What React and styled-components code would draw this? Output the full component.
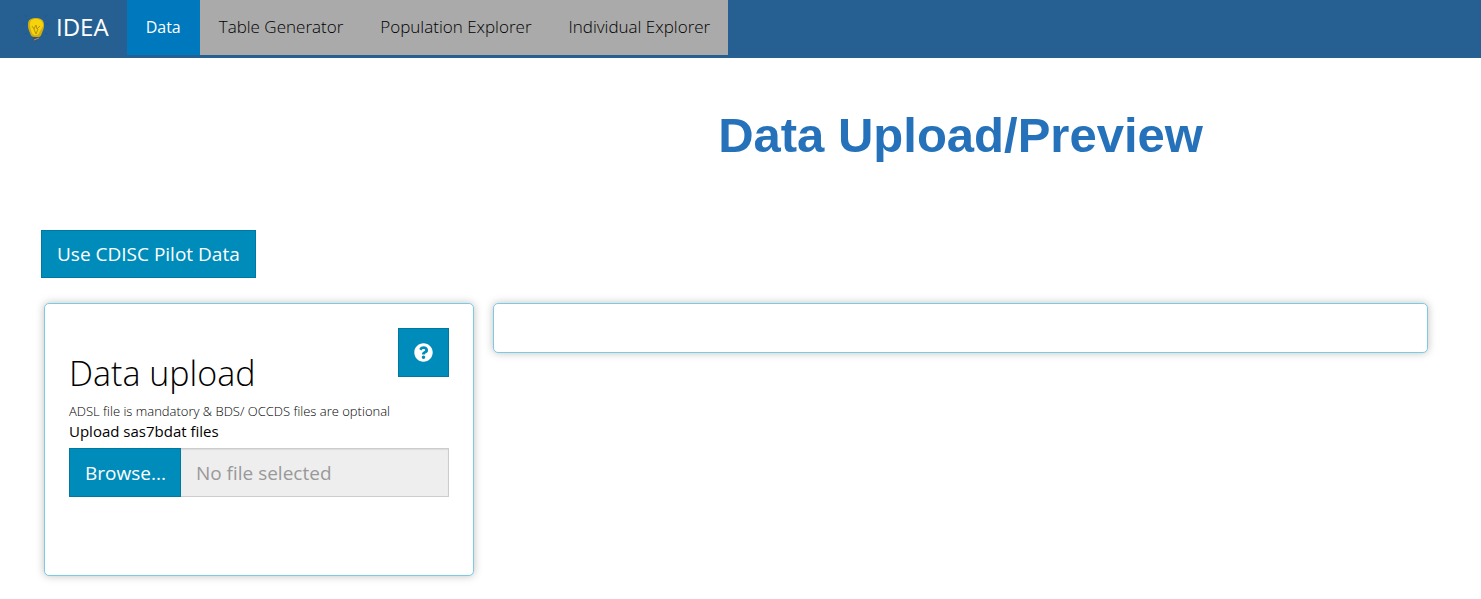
import React, { useState } from "react";
import styled, { createGlobalStyle } from "styled-components";
import { FaQuestionCircle } from "react-icons/fa";

const GlobalStyle = createGlobalStyle`
  *, *::before, *::after { box-sizing: border-box; }
  body {
    margin: 0;
    background: #fff;
    color: #000;
    font-family: "Open Sans", "Noto Sans", sans-serif;
    font-size: 15px;
    line-height: 20px;
  }
  button, input { font-family: inherit; }
`;

const Navbar = styled.header`
  display: flex;
  align-items: flex-start;
  height: 58px;
  background: #266092;
`;

const Brand = styled.a`
  display: flex;
  align-items: center;
  gap: 7px;
  height: 54px;
  padding: 0 18px 0 23px;
  color: #fff;
  font-size: 24px;
  text-decoration: none;
`;

const Tabs = styled.nav`
  display: flex;
`;

const Tab = styled.a`
  padding: 0 18px 0 19px;
  height: 55px;
  line-height: 54px;
  font-size: 17px;
  font-weight: ${(p) => (p.$active ? 400 : 300)};
  text-decoration: none;
  white-space: nowrap;
  color: ${(p) => (p.$active ? "#fff" : "#000")};
  background: ${(p) => (p.$active ? "#0078bd" : "#aaa")};
  ${(p) => p.$active && "font-size: 16px; padding: 0 19px;"}
`;

const Page = styled.main`
  display: grid;
  grid-template-columns: minmax(0, 46fr) minmax(0, 100fr);
  column-gap: 19px;
  align-items: start;
  padding: 48px 53px 23px 44px;
`;

const Title = styled.h1`
  grid-column: 2;
  margin: 0;
  font-family: "Liberation Sans", Arial, sans-serif;
  font-size: 49px;
  line-height: 58px;
  text-align: center;
  color: #2572ba;
`;

const Actions = styled.div`
  grid-column: 1 / -1;
  margin: 66px 0 25px -3px;
`;

const Button = styled.button`
  display: inline-flex;
  align-items: center;
  justify-content: center;
  height: ${(p) => p.$height || 48}px;
  padding: 0 15px;
  border: 1px solid #0079a1;
  background: #008cba;
  color: #fff;
  font-size: 19px;
  cursor: pointer;
`;

const Card = styled.section`
  min-height: ${(p) => p.$minHeight}px;
  padding: 24px;
  border: 1px solid #7bcbe5;
  border-radius: 5px;
  background: #fff;
  box-shadow: 0 0 8px rgba(0, 0, 0, 0.25);
`;

const CardHeader = styled.div`
  display: flex;
  justify-content: space-between;
  align-items: flex-start;
`;

const CardTitle = styled.h2`
  margin: 22px 0 5px;
  font-size: 34px;
  line-height: 46px;
  font-weight: 300;
`;

const Note = styled.p`
  margin: 0;
  font-size: 13px;
  font-weight: 300;
`;

const FieldLabel = styled.label`
  display: block;
  margin-bottom: 7px;
`;

const FileRow = styled.div`
  display: flex;
  height: 49px;
`;

const BrowseLabel = styled.label`
  display: flex;
  align-items: center;
  padding: 0 14px 0 15px;
  border: 1px solid #0079a1;
  background: #008cba;
  color: #fff;
  font-size: 19px;
  cursor: pointer;
`;

const HiddenFile = styled.input`
  position: absolute;
  width: 1px;
  height: 1px;
  opacity: 0;
`;

const FileName = styled.input`
  flex: 1;
  min-width: 0;
  padding: 0 15px;
  border: 1px solid #ccc;
  border-left: 0;
  border-radius: 0;
  background: #eee;
  box-shadow: inset 0 1px 1px rgba(0, 0, 0, 0.08);
  color: #6f6f6f;
  font-size: 19px;
  &::placeholder { color: #999; opacity: 1; }
`;

function Bulb() {
  return (
    <svg width="26" height="30" viewBox="0 0 26 30" aria-hidden="true">
      <g stroke="#1d4b76" strokeWidth="1" opacity="0.4">
        <path d="M4 5l-2-2M3 12H0M22 5l2-2M23 12h3M4 21l-2 1M22 21l2 1" />
      </g>
      <path d="M13 6C7 6 5 8 5 13c0 4 1 5 2 8 1 3 2 4 5 4h3c3 0 3-2 4-4 1-3 2-4 2-8 0-5-3-7-8-7z" fill="#cfae14" />
      <path d="M13 7C8 7 7 9 7 13c0 3 1 5 2 8 1 3 6 3 7 0 1-3 4-5 4-8 0-4-3-6-7-6z" fill="#f6d30a" />
      <path d="M9 14l2 3 2-4 1 4 3-3M11 17l2 5 2-5" fill="none" stroke="#b29508" strokeWidth="1" />
      <path d="M10 25h7l-1 2-4 3-2-2z" fill="#46535d" />
      <path d="M11 28l5-2" stroke="#8c9aa4" strokeWidth="1" />
    </svg>
  );
}

const tabs = ["Data", "Table Generator", "Population Explorer", "Individual Explorer"];

export default function App() {
  const [active, setActive] = useState("Data");
  const [file, setFile] = useState("");

  return (
    <>
      <GlobalStyle />
      <Navbar>
        <Brand href="#">
          <Bulb />
          IDEA
        </Brand>
        <Tabs>
          {tabs.map((name) => (
            <Tab key={name} href="#" $active={name === active} onClick={() => setActive(name)}>
              {name}
            </Tab>
          ))}
        </Tabs>
      </Navbar>
      <Page>
        <Title>Data Upload/Preview</Title>
        <Actions>
          <Button type="button">Use CDISC Pilot Data</Button>
        </Actions>
        <Card $minHeight={273}>
          <CardHeader>
            <CardTitle>Data upload</CardTitle>
            <Button type="button" $height={49} aria-label="Help">
              <FaQuestionCircle />
            </Button>
          </CardHeader>
          <Note>ADSL file is mandatory &amp; BDS/ OCCDS files are optional</Note>
          <FieldLabel htmlFor="sas-file">Upload sas7bdat files</FieldLabel>
          <FileRow>
            <BrowseLabel>
              Browse...
              <HiddenFile
                id="sas-file"
                type="file"
                accept=".sas7bdat"
                onChange={(e) => setFile(e.target.files[0]?.name || "")}
              />
            </BrowseLabel>
            <FileName type="text" readOnly value={file} placeholder="No file selected" aria-label="Selected file" />
          </FileRow>
        </Card>
        <Card $minHeight={50} aria-label="Preview" />
      </Page>
    </>
  );
}
